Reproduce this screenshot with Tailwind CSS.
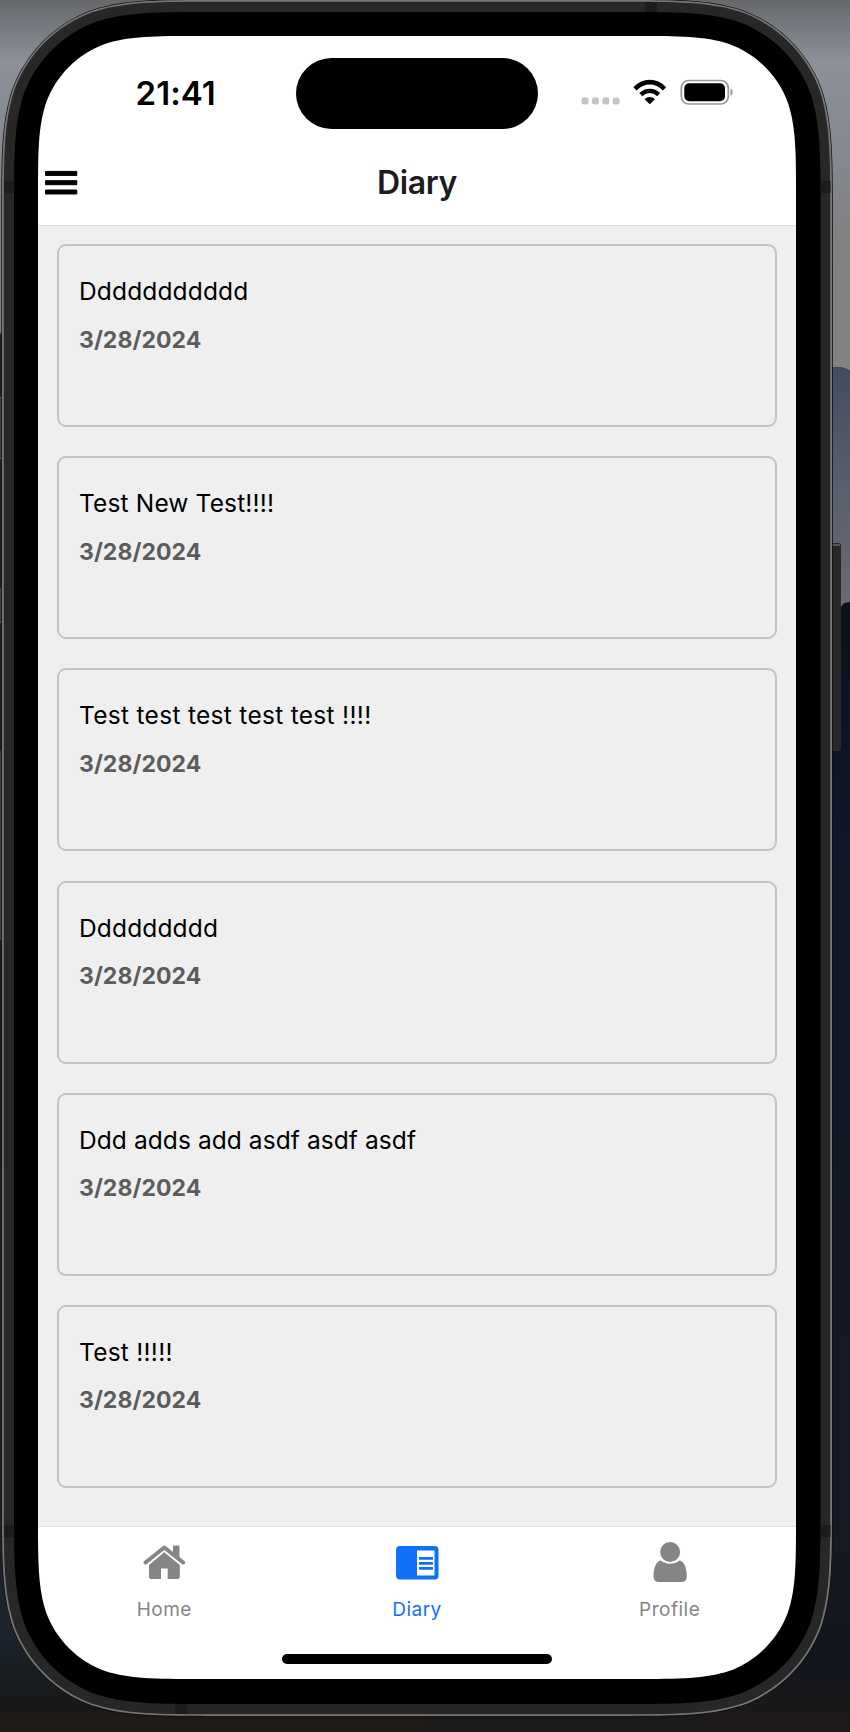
<!DOCTYPE html>
<html lang="en">
<head>
<meta charset="utf-8">
<title>Diary</title>
<script src="https://cdn.jsdelivr.net/npm/@tailwindcss/browser@4"></script>
</head>
<body class="w-[850px] h-[1732px] overflow-hidden bg-[#14171f]">
<div class="relative w-[850px] h-[1732px] overflow-hidden font-['Inter','Liberation_Sans',sans-serif]">
  <!-- wallpaper and device body -->
  <svg class="absolute inset-0" width="850" height="1732" viewBox="0 0 850 1732">
    <defs>
      <linearGradient id="sky" x1="0" y1="0" x2="0" y2="1">
        <stop offset="0" stop-color="#66686c"/><stop offset=".035" stop-color="#8c9098"/><stop offset=".08" stop-color="#858991"/><stop offset=".14" stop-color="#818181"/><stop offset=".3" stop-color="#858483"/><stop offset="1" stop-color="#858483"/>
      </linearGradient>
      <linearGradient id="mist" x1="0" y1="0" x2="0" y2="1">
        <stop offset="0" stop-color="#424c60"/><stop offset=".5" stop-color="#5b606d"/><stop offset="1" stop-color="#6b6c75"/>
      </linearGradient>
      <linearGradient id="night" x1="0" y1="0" x2="0" y2="1">
        <stop offset="0" stop-color="#0d111c"/><stop offset=".2" stop-color="#10172a"/><stop offset=".5" stop-color="#131825"/><stop offset=".8" stop-color="#171a24"/><stop offset=".94" stop-color="#14161d"/><stop offset="1" stop-color="#1d1918"/>
      </linearGradient>
      <linearGradient id="dusk" x1="0" y1="0" x2="0" y2="1">
        <stop offset="0" stop-color="#151c2b"/><stop offset=".88" stop-color="#1c232c"/><stop offset=".96" stop-color="#171819"/><stop offset="1" stop-color="#211b18"/>
      </linearGradient>
    </defs>
    <rect width="850" height="1732" fill="url(#sky)"/>
    <path d="M820 367h22l8 3v260h-30z" fill="url(#mist)"/>
    <path d="M820 612l20-4 4-5 6-1v1130H420V1600h400z" fill="url(#night)"/>
    <rect y="940" width="430" height="792" fill="url(#dusk)"/>
    <path d="M0 333h3v607H0z" fill="#414347"/>
    <path d="M0 334h2v63H0zM0 459h2v129H0zM0 623h2v128H0z" fill="#202020"/>
    <path d="M0 333h3M0 397.500h3M0 458.500h3M0 622.500h3" stroke="#626262" stroke-width="1"/>
    <rect x="829" y="543" width="12" height="208" rx="2.5" fill="#292929"/>
    <path d="M832 545h8" stroke="#686868" stroke-width="1.5"/>
    <path id="edge" fill="#101010"/>
    <path id="rim" fill="#777"/>
    <path id="band" fill="#272727"/>
    <path d="M4 181h10v12H4zM820.500 181h10v12h-10zM4 1525h10v12H4zM820.500 1525h10v12h-10zM645 2h12v10h-12zM175 1704h12v10h-12z" fill="#1c1c1c"/>
    <path id="bezel" fill="#000"/>
    <path id="glass" fill="#fff"/>
  </svg>

  <!-- screen -->
  <div class="relative ml-[38px] pt-9 w-[758px] h-[1679px] flex flex-col">
    <div class="h-[114px] shrink-0 flex items-start">
      <div class="w-[258px] pt-[36.500px] pl-[97.500px] text-[33px] leading-10 font-semibold text-black tracking-[0.1px]">21:41</div>
      <div class="w-[242px] h-[71px] mt-[21.500px] rounded-full bg-black"></div>
      <svg class="ml-[42px] mt-[40px]" width="160" height="32" viewBox="580 76 160 32">
        <g fill="#c4c4c4"><rect x="581.500" y="97.500" width="7" height="7" rx="2.500"/><rect x="592" y="97.500" width="7" height="7" rx="2.500"/><rect x="602.300" y="97.500" width="7" height="7" rx="2.500"/><rect x="612.600" y="97.500" width="7" height="7" rx="2.500"/></g>
        <path d="M635 88.800C643.800 79.900 655.700 79.900 664.500 88.800" fill="none" stroke="#000" stroke-width="4.600"/>
        <path d="M640.800 94.600C646.200 89.600 653.300 89.600 658.700 94.600" fill="none" stroke="#000" stroke-width="4.400"/>
        <path d="M644.600 99.300C647.600 96.100 651.900 96.100 654.900 99.300L649.750 104.300z"/>
        <rect x="681.300" y="80.500" width="47" height="23.500" rx="7.500" fill="none" stroke="#999" stroke-width="1.700"/>
        <rect x="684.300" y="83.300" width="40.700" height="18" rx="5"/>
        <path d="M730.500 88.500c3 1.500 3 6 0 7.500z" fill="#999"/>
      </svg>
    </div>
    <header class="h-[76px] shrink-0 border-b border-[#dedede] grid grid-cols-[100px_1fr_100px]">
      <svg class="ml-[6px] mt-[20px]" width="34" height="26" viewBox="0 0 34 26"><path d="M1.500 1.400h31.300v4H1.500zM1.500 10.700h31.300v4H1.500zM1.500 20h31.300v4H1.500z" stroke="#000" stroke-width="1" stroke-linejoin="round"/></svg>
      <h1 class="text-center pt-[13px] text-[32px] leading-10 font-semibold tracking-[-0.4px] text-[#1c1c1e]">Diary</h1>
    </header>
    <main class="h-[1300px] shrink-0 bg-[#efefef] pt-[18px] pl-[19px] pr-[19px] flex flex-col gap-[29.200px]">
      <article class="h-[183px] shrink-0 rounded-[9px] border-2 border-[#c4c4c4] pl-[20px] pt-[29px]"><h2 class="text-[24.500px] leading-8 text-black tracking-[0.150px]">Ddddddddddd</h2><p class="mt-[16.500px] text-[23px] leading-8 font-bold tracking-[0.050px] text-[#5c5c5c]">3/28/2024</p></article>
      <article class="h-[183px] shrink-0 rounded-[9px] border-2 border-[#c4c4c4] pl-[20px] pt-[29px]"><h2 class="text-[24.500px] leading-8 text-black tracking-[0.150px]">Test New Test!!!!</h2><p class="mt-[16.500px] text-[23px] leading-8 font-bold tracking-[0.050px] text-[#5c5c5c]">3/28/2024</p></article>
      <article class="h-[183px] shrink-0 rounded-[9px] border-2 border-[#c4c4c4] pl-[20px] pt-[29px]"><h2 class="text-[24.500px] leading-8 text-black tracking-[0.300px]">Test test test test test !!!!</h2><p class="mt-[16.500px] text-[23px] leading-8 font-bold tracking-[0.050px] text-[#5c5c5c]">3/28/2024</p></article>
      <article class="h-[183px] shrink-0 rounded-[9px] border-2 border-[#c4c4c4] pl-[20px] pt-[29px]"><h2 class="text-[24.500px] leading-8 text-black tracking-[0.150px]">Ddddddddd</h2><p class="mt-[16.500px] text-[23px] leading-8 font-bold tracking-[0.050px] text-[#5c5c5c]">3/28/2024</p></article>
      <article class="h-[183px] shrink-0 rounded-[9px] border-2 border-[#c4c4c4] pl-[20px] pt-[29px]"><h2 class="text-[24.500px] leading-8 text-black tracking-[0.080px]">Ddd adds add asdf asdf asdf</h2><p class="mt-[16.500px] text-[23px] leading-8 font-bold tracking-[0.050px] text-[#5c5c5c]">3/28/2024</p></article>
      <article class="h-[183px] shrink-0 rounded-[9px] border-2 border-[#c4c4c4] pl-[20px] pt-[29px]"><h2 class="text-[24.500px] leading-8 text-black tracking-[0.250px]">Test !!!!!</h2><p class="mt-[16.500px] text-[23px] leading-8 font-bold tracking-[0.050px] text-[#5c5c5c]">3/28/2024</p></article>
    </main>
    <nav class="h-[128px] shrink-0 border-t border-[#e2e2e2] grid grid-cols-3 text-[19px] leading-6 tracking-[0.5px] text-[#858585]">
      <div class="flex flex-col items-center pt-[13px]">
        <svg width="46" height="46" viewBox="141 1540 46 46" fill="#858585"><path d="M145.500 1562.500L164.300 1547.500L183.200 1562.500" fill="none" stroke="#858585" stroke-width="4" stroke-linecap="round" stroke-linejoin="round"/><path d="M173 1546.500q0-1 1-1h4.500q1 0 1 1V1560l-6.500-5z"/><path d="M164.300 1552.300L179.800 1565V1577q0 2-2 2H167.700V1568.500H161V1579H151q-2 0-2-2V1565z"/></svg>
        <span class="mt-[12px]">Home</span>
      </div>
      <div class="flex flex-col items-center pt-[13px] text-[#1170f8]">
        <svg width="46" height="46" viewBox="394 1540 46 46"><rect x="396" y="1546" width="42.500" height="33.500" rx="4" fill="#1170f8"/><path d="M417 1550.500h17.500v25H417z" fill="#fff"/><path d="M419 1557h14v2.800h-14zM419 1562h14v2.700h-14zM419 1567h14v2.800h-14z" fill="#1170f8"/></svg>
        <span class="mt-[12px]">Diary</span>
      </div>
      <div class="flex flex-col items-center pt-[13px]">
        <svg width="46" height="46" viewBox="646.700 1540 46 46" fill="#858585"><circle cx="669.800" cy="1552" r="10"/><path d="M660.500 1560.600C665.500 1564.800 674.200 1564.800 679.200 1560.600C684 1561.500 686.500 1568.500 686.500 1576.500Q686.500 1582 680.500 1582H659.200Q653.200 1582 653.200 1576.500C653.200 1568.500 655.700 1561.500 660.500 1560.600z"/></svg>
        <span class="mt-[12px]">Profile</span>
      </div>
    </nav>
    <div class="mx-auto w-[270px] h-[9.500px] rounded-full bg-black shrink-0"></div>
  </div>
</div>
<script>
// Rounded rectangle with continuous-curvature corners.
function squircle(x, y, w, h, r) {
  const k = [1.528665, 1.088493, 0.868407, 0.631494, 0.074911, 0.372824, 0.16906].map(v => v * r);
  const corner = (cx, cy, sx, sy, swap) => {
    const pts = [[k[0],0],[k[1],0],[k[2],0],[k[3],k[4]],[k[5],k[6]],[k[6],k[5]],[k[4],k[3]],[0,k[2]],[0,k[1]],[0,k[0]]];
    if (swap) pts.reverse();
    const p = pts.map(([a, b]) => (cx + sx * a) + ' ' + (cy + sy * b));
    return 'L' + p[0] + 'C' + p.slice(1, 4).join(' ') + 'C' + p.slice(4, 7).join(' ') + 'C' + p.slice(7).join(' ');
  };
  return ('M' + (x + w / 2) + ' ' + y + corner(x + w, y, -1, 1, false) + corner(x + w, y + h, -1, -1, true) + corner(x, y + h, 1, -1, false) + corner(x, y, 1, 1, true) + 'Z');
}
const layers = { edge: [1.2, -0.8, 831.6, 1717.6, 143.500], rim: [2, 0, 830, 1716, 142], band: [3.8, 1.8, 826.4, 1712.4, 140], bezel: [14, 12, 806.5, 1692, 130], glass: [38, 36, 758, 1643, 106] };
for (const id in layers) document.getElementById(id).setAttribute('d', squircle(...layers[id]));
</script>
</body>
</html>
